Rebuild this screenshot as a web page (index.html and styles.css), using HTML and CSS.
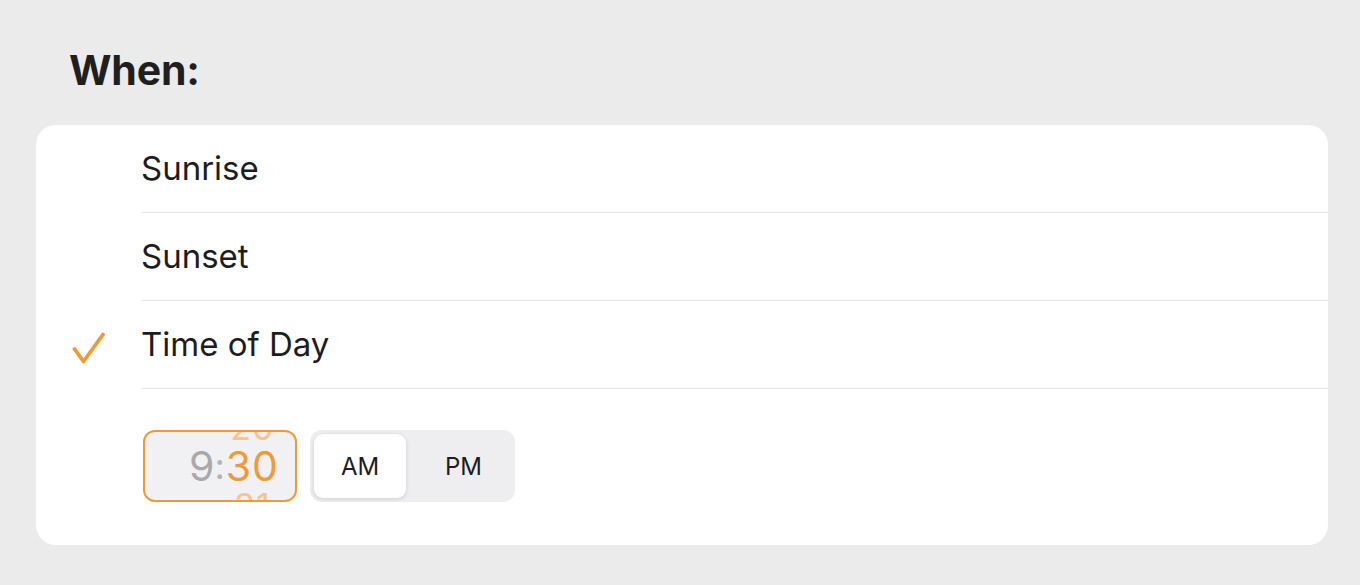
FILE: index.html
```html
<!DOCTYPE html>
<html>
<head>
<meta charset="utf-8">
<link rel="stylesheet" href="styles.css">
</head>
<body>
<div class="page">
  <h1 class="title">When:</h1>
  <div class="card">
    <div class="row">
      <div class="check"></div>
      <div class="label">Sunrise</div>
    </div>
    <div class="row">
      <div class="check"></div>
      <div class="label">Sunset</div>
    </div>
    <div class="row">
      <div class="check">
        <svg width="36" height="36" viewBox="0 0 36 36"><polyline points="2.5,20 11.5,32.5 31,5.5" fill="none" stroke="#f09a36" stroke-width="3.8" stroke-linecap="round" stroke-linejoin="round"/></svg>
      </div>
      <div class="label">Time of Day</div>
    </div>
    <div class="time-row">
      <div class="picker">
        <span class="hour">9</span><span class="colon">:</span>
        <div class="minutes">
          <div class="min ghost">20</div>
          <div class="min current">30</div>
          <div class="min ghost">31</div>
        </div>
      </div>
      <div class="segment">
        <div class="seg selected">AM</div>
        <div class="seg other">PM</div>
      </div>
    </div>
  </div>
</div>
</body>
</html>
```
FILE: styles.css
```css
html, body {
  margin: 0;
  padding: 0;
  background: #ebebeb;
}
body {
  width: 1360px;
  height: 585px;
  overflow: hidden;
  font-family: "Inter", "Liberation Sans", sans-serif;
  color: #1d1d1f;
}
.page {
  padding: 46px 32px 0 36px;
}
.title {
  margin: 0 0 0 33px;
  font-size: 41px;
  font-weight: 700;
  line-height: 48px;
  height: 79px;
  letter-spacing: -0.2px;
  color: #1f1f1f;
}
.card {
  background: #fff;
  border-radius: 20px;
  height: 420px;
  overflow: hidden;
}
.row {
  display: flex;
  align-items: center;
  height: 88px;
}
.check {
  width: 105px;
  height: 100%;
  display: flex;
  align-items: center;
  padding-left: 36px;
  box-sizing: border-box;
  flex: none;
}
.check svg {
  margin-top: 4px;
}
.label {
  flex: 1;
  height: 100%;
  display: flex;
  align-items: center;
  padding-left: 0;
  font-size: 33px;
  letter-spacing: 0;
  border-bottom: 1px solid #e4e4e6;
  box-sizing: border-box;
  padding-bottom: 2px;
}
.time-row {
  display: flex;
  align-items: center;
  padding: 41px 0 0 107px;
  gap: 13px;
}
.picker {
  width: 154px;
  height: 72px;
  box-sizing: border-box;
  border: 2px solid #f09a36;
  border-radius: 12px;
  background: #f1f1f3;
  display: flex;
  align-items: center;
  justify-content: flex-end;
  padding-right: 16px;
  overflow: hidden;
  font-size: 41px;
  letter-spacing: 1px;
}
.hour {
  color: #a9a9ab;
}
.colon {
  color: #b4b4b6;
  margin: 0 0 0 -1px;
  font-size: 36px;
}
.minutes {
  display: flex;
  flex-direction: column;
  align-items: center;
  height: 68px;
  justify-content: center;
}
.min {
  line-height: 39px;
  height: 39px;
  flex: none;
}
.current {
  color: #f09a36;
}
.ghost {
  color: #f5c590;
  font-size: 34px;
  line-height: 39px;
}
.segment {
  display: flex;
  align-items: center;
  width: 205px;
  height: 72px;
  background: #eeeef0;
  border-radius: 12px;
  padding: 4px;
  box-sizing: border-box;
}
.seg {
  flex: 1;
  height: 100%;
  display: flex;
  align-items: center;
  justify-content: center;
  font-size: 24px;
  color: #1d1d1f;
  border-radius: 9px;
}
.seg.other {
  padding-left: 10px;
}
.seg.selected {
  background: #fff;
  flex: none;
  width: 92px;
  box-shadow: 0 1px 4px rgba(0,0,0,0.14);
}
```
